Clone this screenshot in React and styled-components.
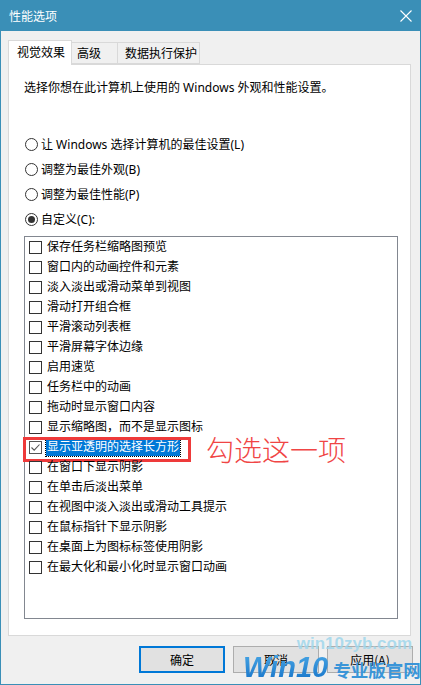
import React from "react";
import styled, { createGlobalStyle } from "styled-components";

const Global = createGlobalStyle`
  html, body { margin: 0; padding: 0; background: #ffffff; }
  body { font-family: "Noto Sans", "Noto Sans CJK SC", sans-serif; font-size: 12px; color: #000; }
  * { box-sizing: border-box; }
`;

const Window = styled.div`
  position: relative;
  width: 421px;
  height: 685px;
  background: #f0f0f0;
  border: 1px solid #3a8fb7;
  border-top: none;
  display: flex;
  flex-direction: column;
  overflow: hidden;
`;

const TitleBar = styled.div`
  height: 31px;
  margin: 0 -1px;
  background: #3a8fb7;
  display: flex;
  align-items: center;
  justify-content: space-between;
  padding-left: 9px;
  color: #fff;
  font-family: "Noto Sans CJK SC", sans-serif;
  font-size: 12px;
`;

const CloseBtn = styled.div`
  width: 46px;
  height: 31px;
  display: flex;
  align-items: center;
  justify-content: center;
  margin-right: -8px;
`;

const Body = styled.div`
  flex: 1;
  display: flex;
  flex-direction: column;
  padding: 9px 9px 0 7px;
`;

const TabStrip = styled.div`
  display: flex;
  align-items: flex-end;
  height: 24px;
  position: relative;
  z-index: 1;
`;

const Tab = styled.div`
  width: ${(p) => p.$w}px;
  height: ${(p) => (p.$active ? 25 : 22)}px;
  padding-left: ${(p) => p.$pl}px;
  margin-bottom: ${(p) => (p.$active ? -1 : 0)}px;
  background: ${(p) => (p.$active ? "#ffffff" : "#f0f0f0")};
  border: 1px solid #d9d9d9;
  border-bottom: ${(p) => (p.$active ? "none" : "1px solid #d9d9d9")};
  border-left: ${(p) => (p.$first ? "1px solid #d9d9d9" : p.$active ? "1px solid #d9d9d9" : "none")};
  display: flex;
  align-items: center;
  font-family: "Noto Sans CJK SC", sans-serif;
  font-size: 12px;
  line-height: 16px;
  padding-bottom: ${(p) => (p.$active ? 2 : 0)}px;
`;

const Panel = styled.div`
  width: 403px;
  height: 572px;
  background: #fff;
  border: 1px solid #d9d9d9;
  padding: 15px 0 0 15px;
  display: flex;
  flex-direction: column;
`;

const Desc = styled.div`
  height: 16px;
  line-height: 16px;
  font-size: 12px;
`;

const RadioGroup = styled.div`
  margin-top: 36px;
  display: flex;
  flex-direction: column;
`;

const RadioRow = styled.div`
  height: 25px;
  display: flex;
  align-items: center;
  gap: 3px;
  line-height: 16px;
`;

const RadioCircle = styled.span`
  width: 13px;
  height: 13px;
  margin-left: 1px;
  border-radius: 50%;
  border: 1px solid #333;
  background: #fff;
  display: flex;
  align-items: center;
  justify-content: center;
  &::after {
    content: "";
    display: ${(p) => (p.$on ? "block" : "none")};
    width: 7px;
    height: 7px;
    border-radius: 50%;
    background: #333;
  }
`;

const ListBox = styled.div`
  margin-top: 4px;
  width: 374px;
  height: 383px;
  border: 1px solid #828790;
  background: #fff;
  display: flex;
  flex-direction: column;
`;

const Item = styled.div`
  position: relative;
  height: 20px;
  display: flex;
  align-items: center;
  padding-left: 4px;
`;

const Box = styled.span`
  width: 13px;
  height: 13px;
  border: 1px solid ${(p) => (p.$on ? "#555" : "#333")};
  background: #fff;
  display: flex;
  align-items: center;
  justify-content: center;
  flex-shrink: 0;
`;

const Label = styled.span`
  margin-left: 4px;
  height: 18px;
  line-height: 18px;
  padding: 0 1px;
  white-space: nowrap;
  background: ${(p) => (p.$sel ? "#0078d7" : "transparent")};
  color: ${(p) => (p.$sel ? "#fff" : "#000")};
  outline: ${(p) => (p.$sel ? "1px dotted #000" : "none")};
`;

const RedBox = styled.div`
  position: absolute;
  left: -2px;
  top: 0;
  width: 168px;
  height: 25px;
  border: 3px solid #ee3a3a;
  pointer-events: none;
`;

const Note = styled.div`
  position: absolute;
  left: 181px;
  top: -3px;
  color: #f04545;
  font-family: "Noto Sans CJK SC", sans-serif;
  font-weight: 300;
  font-size: 28px;
  line-height: 30px;
  white-space: nowrap;
`;

const ButtonRow = styled.div`
  margin-top: 10px;
  display: flex;
  justify-content: flex-end;
  gap: 8px;
  padding-right: -2px;
  margin-right: -2px;
`;

const Button = styled.div`
  width: 86px;
  height: 27px;
  background: #e1e1e1;
  border: ${(p) => (p.$def ? "2px solid #0078d7" : "1px solid #adadad")};
  display: flex;
  align-items: center;
  justify-content: center;
  font-family: "Noto Sans CJK SC", sans-serif;
  font-size: 12px;
`;

const Watermark = styled.div`
  position: absolute;
  left: 242px;
  top: 634px;
  width: 180px;
  display: flex;
  flex-direction: column;
  pointer-events: none;
`;

const Site = styled.div`
  align-self: flex-end;
  margin-right: 11px;
  font-family: "Liberation Sans", sans-serif;
  font-weight: bold;
  font-size: 17px;
  line-height: 20px;
  color: rgba(160, 215, 236, 0.85);
`;

const Brand = styled.div`
  display: flex;
  align-items: baseline;
  margin-top: -2px;
`;

const BrandWin = styled.span`
  font-family: "Liberation Sans", sans-serif;
  font-weight: bold;
  font-style: italic;
  font-size: 29px;
  line-height: 30px;
  background: linear-gradient(#4aa8e6, #1673c8);
  -webkit-background-clip: text;
  background-clip: text;
  color: transparent;
`;

const BrandCn = styled.span`
  margin-left: 5px;
  font-family: "Noto Sans CJK SC", sans-serif;
  font-weight: bold;
  font-size: 17.5px;
  line-height: 24px;
  color: #3a95d8;
`;

const tabs = [
  { t: "视觉效果", w: 64, pl: 8, active: true },
  { t: "高级", w: 46, pl: 5 },
  { t: "数据执行保护", w: 82, pl: 7 },
];

const radios = [
  "让 Windows 选择计算机的最佳设置(L)",
  "调整为最佳外观(B)",
  "调整为最佳性能(P)",
  "自定义(C):",
];

const items = [
  "保存任务栏缩略图预览",
  "窗口内的动画控件和元素",
  "淡入淡出或滑动菜单到视图",
  "滑动打开组合框",
  "平滑滚动列表框",
  "平滑屏幕字体边缘",
  "启用速览",
  "任务栏中的动画",
  "拖动时显示窗口内容",
  "显示缩略图，而不是显示图标",
  "显示亚透明的选择长方形",
  "在窗口下显示阴影",
  "在单击后淡出菜单",
  "在视图中淡入淡出或滑动工具提示",
  "在鼠标指针下显示阴影",
  "在桌面上为图标标签使用阴影",
  "在最大化和最小化时显示窗口动画",
];

export default function App() {
  return (
    <>
      <Global />
      <Window>
        <TitleBar>
          <span>性能选项</span>
          <CloseBtn>
            <svg width="12" height="12" viewBox="0 0 12 12">
              <path d="M0.5 0.5 L11.5 11.5 M11.5 0.5 L0.5 11.5" stroke="#fff" strokeWidth="1.1" fill="none" />
            </svg>
          </CloseBtn>
        </TitleBar>
        <Body>
          <TabStrip>
            {tabs.map((tb, i) => (
              <Tab key={tb.t} $w={tb.w} $pl={tb.pl} $active={tb.active} $first={i === 0}>
                {tb.t}
              </Tab>
            ))}
          </TabStrip>
          <Panel>
            <Desc>选择你想在此计算机上使用的 Windows 外观和性能设置。</Desc>
            <RadioGroup>
              {radios.map((r, i) => (
                <RadioRow key={r}>
                  <RadioCircle $on={i === 3} />
                  <span>{r}</span>
                </RadioRow>
              ))}
            </RadioGroup>
            <ListBox>
              {items.map((it, i) => {
                const sel = i === 10;
                return (
                  <Item key={it}>
                    <Box $on={sel}>
                      {sel && (
                        <svg width="11" height="11" viewBox="0 0 11 11">
                          <path d="M1.5 5.5 L4.2 8.2 L9.5 2.5" stroke="#555" strokeWidth="1.1" fill="none" />
                        </svg>
                      )}
                    </Box>
                    <Label $sel={sel}>{it}</Label>
                    {sel && (
                      <>
                        <RedBox />
                        <Note>勾选这一项</Note>
                      </>
                    )}
                  </Item>
                );
              })}
            </ListBox>
          </Panel>
          <ButtonRow>
            <Button $def>确定</Button>
            <Button>取消</Button>
            <Button>应用(A)</Button>
          </ButtonRow>
        </Body>
        <Watermark>
          <Site>win10zyb.com</Site>
          <Brand>
            <BrandWin>Win10</BrandWin>
            <BrandCn>专业版官网</BrandCn>
          </Brand>
        </Watermark>
      </Window>
    </>
  );
}
